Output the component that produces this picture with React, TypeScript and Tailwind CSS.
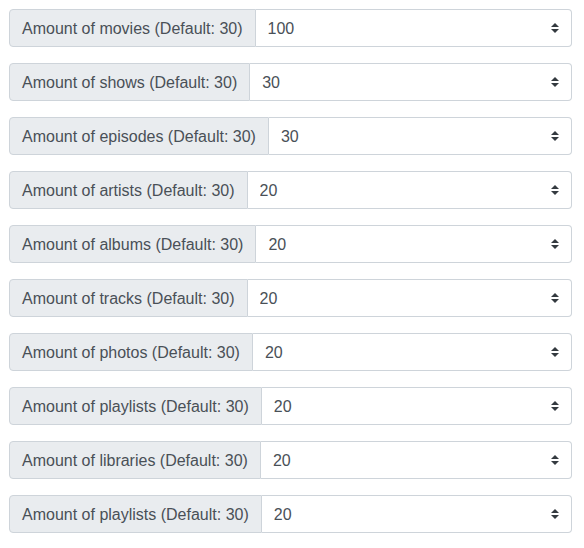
import React from 'react'

const rows = [
  { label: 'Amount of movies (Default: 30)', value: '100' },
  { label: 'Amount of shows (Default: 30)', value: '30' },
  { label: 'Amount of episodes (Default: 30)', value: '30' },
  { label: 'Amount of artists (Default: 30)', value: '20' },
  { label: 'Amount of albums (Default: 30)', value: '20' },
  { label: 'Amount of tracks (Default: 30)', value: '20' },
  { label: 'Amount of photos (Default: 30)', value: '20' },
  { label: 'Amount of playlists (Default: 30)', value: '20' },
  { label: 'Amount of libraries (Default: 30)', value: '20' },
  { label: 'Amount of playlists (Default: 30)', value: '20' },
]

const options = ['10', '20', '30', '50', '100']

function App() {
  return (
    <div className="min-h-screen bg-white pl-[9px] pr-[12px] pt-[9px] font-['Liberation_Sans',sans-serif] text-[16px] text-[#495057]">
      <div className="flex flex-col gap-[16px]">
        {rows.map((row, i) => (
          <div key={i} className="flex h-[38px] items-stretch">
            <div className="flex shrink-0 items-center rounded-l-[4px] border border-[#ced4da] bg-[#e9ecef] px-[12px] pt-[2px] whitespace-nowrap">
              {row.label}
            </div>
            <div className="relative flex-1">
              <select
                defaultValue={row.value}
                className="h-full w-full appearance-none rounded-r-[4px] border border-l-0 border-[#ced4da] bg-white pl-[12px] pr-[28px] pt-[2px] text-[#495057] outline-none"
              >
                {options.map(o => (
                  <option key={o} value={o}>{o}</option>
                ))}
              </select>
              <svg
                className="pointer-events-none absolute right-[13px] top-1/2 -translate-y-1/2"
                width="8"
                height="10"
                viewBox="0 0 4 5"
              >
                <path fill="#343a40" d="M2 0L0 2h4zm0 5L0 3h4z" />
              </svg>
            </div>
          </div>
        ))}
      </div>
    </div>
  )
}

export default App
